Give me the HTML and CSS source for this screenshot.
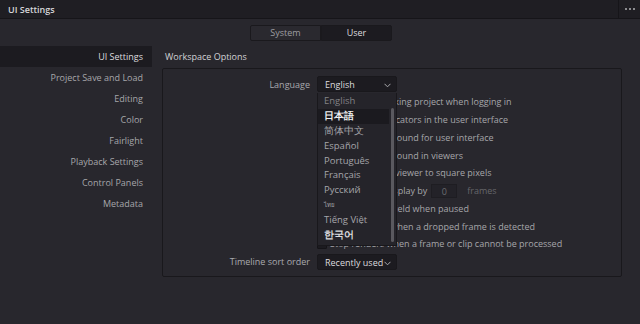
FILE: index.html
```html
<!DOCTYPE html>
<html lang="en">
<head>
    <meta charset="UTF-8">
    <meta name="viewport" content="width=device-width, initial-scale=1.0">
    <title>UI Settings</title>
    <link rel="stylesheet" href="styles.css">
</head>
<body>
    <div class="titlebar">
        <span class="title">UI Settings</span>
        <div class="more"><i></i><i></i><i></i></div>
    </div>

    <div class="tabs">
        <div class="tab">System</div>
        <div class="tab active">User</div>
    </div>

    <div class="main">
        <ul class="sidebar">
            <li class="selected">UI Settings</li>
            <li>Project Save and Load</li>
            <li>Editing</li>
            <li>Color</li>
            <li>Fairlight</li>
            <li>Playback Settings</li>
            <li>Control Panels</li>
            <li>Metadata</li>
        </ul>

        <div class="content">
            <div class="heading">Workspace Options</div>
            <div class="panel">
                <div class="row">
                    <span class="label">Language</span>
                    <div class="select-wrap">
                        <div class="select">English
                            <svg class="chev" width="7" height="5" viewBox="0 0 7 5"><polyline points="0.5,0.8 3.5,3.8 6.5,0.8" fill="none" stroke="#a9a9ad" stroke-width="1"/></svg>
                        </div>
                        <ul class="dropdown">
                            <li class="dim">English</li>
                            <li class="hover">日本語</li>
                            <li>简体中文</li>
                            <li>Español</li>
                            <li>Português</li>
                            <li>Français</li>
                            <li>Русский</li>
                            <li class="thai">ไทย</li>
                            <li>Tiếng Việt</li>
                            <li class="korean">한국어</li>
                        </ul>
                        <div class="scrollbar"></div>
                    </div>
                </div>

                <div class="checks">
                    <div class="check"><span class="box"></span>Reload last working project when logging in</div>
                    <div class="check"><span class="box"></span>Show focus indicators in the user interface</div>
                    <div class="check"><span class="box"></span>Use gray background for user interface</div>
                    <div class="check"><span class="box"></span>Use gray background in viewers</div>
                    <div class="check"><span class="box"></span>Auto-resize HD viewer to square pixels</div>
                    <div class="check"><span class="box"></span>Delay viewer display by <span class="num">0</span> <span class="unit">frames</span></div>
                    <div class="check"><span class="box"></span>Show all video field when paused</div>
                    <div class="check"><span class="box"></span>Stop playback when a dropped frame is detected</div>
                    <div class="check"><span class="box"></span>Stop renders when a frame or clip cannot be processed</div>
                </div>

                <div class="row last">
                    <span class="label">Timeline sort order</span>
                    <div class="select">Recently used
                        <svg class="chev" width="7" height="5" viewBox="0 0 7 5"><polyline points="0.5,0.8 3.5,3.8 6.5,0.8" fill="none" stroke="#a9a9ad" stroke-width="1"/></svg>
                    </div>
                </div>
            </div>
        </div>
    </div>
</body>
</html>
```

FILE: styles.css
```css
* {
    box-sizing: border-box;
}
body {
    margin: 0;
    width: 640px;
    height: 324px;
    overflow: hidden;
    background-color: #28272d;
    font-family: "Open Sans", "Noto Sans", sans-serif;
    font-size: 9px;
    color: #a9a9ad;
}
ul {
    list-style: none;
    margin: 0;
    padding: 0;
}
.titlebar {
    height: 19px;
    display: flex;
    align-items: center;
    justify-content: space-between;
    background-color: #1f1e23;
    border-bottom: 1px solid #161519;
}
.title {
    padding-left: 8px;
    font-weight: 600;
    font-size: 9px;
    color: #d6d6d9;
}
.more {
    height: 18px;
    width: 22px;
    border-left: 1px solid #161519;
    display: flex;
    align-items: center;
    justify-content: center;
    gap: 2px;
}
.more i {
    width: 2px;
    height: 2px;
    background-color: #8c8c90;
}
.tabs {
    display: flex;
    justify-content: center;
    margin-top: 6px;
    padding-left: 2px;
}
.tab {
    width: 71px;
    height: 16px;
    line-height: 14px;
    text-align: center;
    border: 1px solid #1a191d;
    background-color: #2a292f;
    color: #9d9da1;
}
.tab:first-child {
    border-radius: 2px 0 0 2px;
}
.tab.active {
    background-color: #1c1b20;
    color: #dcdcdf;
    border-radius: 0 2px 2px 0;
}
.main {
    display: flex;
    margin-top: 5px;
    gap: 10px;
}
.sidebar {
    width: 152px;
}
.sidebar li {
    height: 21px;
    line-height: 21px;
    text-align: right;
    padding-right: 9px;
    color: #a6a6aa;
}
.sidebar li.selected {
    background-color: #1c1b20;
    color: #dcdcdf;
}
.content {
    width: 460px;
}
.heading {
    height: 22px;
    line-height: 21px;
    padding-left: 3px;
    color: #d2d2d5;
}
.panel {
    border: 1px solid #19181c;
    border-radius: 2px;
    padding: 7px 0 6px;
}
.row {
    display: flex;
    align-items: center;
    gap: 7px;
    height: 16px;
}
.row.last {
    margin-top: 1px;
}
.label {
    width: 147px;
    text-align: right;
}
.select {
    position: relative;
    width: 80px;
    height: 16px;
    line-height: 15px;
    padding-left: 7px;
    background-color: #1c1b20;
    border: 1px solid #19181c;
    border-radius: 2px;
    color: #dcdcdf;
}
.chev {
    position: absolute;
    right: 5px;
    top: 6px;
}
.select-wrap {
    position: relative;
    z-index: 2;
}
.dropdown {
    position: absolute;
    left: 0;
    top: 17px;
    width: 80px;
    height: 153px;
    padding-top: 1px;
    background-color: #25242a;
    border: 1px solid #19181c;
    border-top: none;
}
.dropdown li {
    height: 14.9px;
    line-height: 14.9px;
    padding-left: 6px;
    margin-right: 7px;
    color: #a6a6aa;
    font-size: 9.5px;
}
.dropdown li.dim {
    color: #828286;
}
.dropdown li.hover {
    background-color: #1b1a1f;
    color: #f0f0f2;
    font-weight: 700;
}
.dropdown li.thai {
    font-size: 6px;
}
.dropdown li.korean {
    color: #dcdcdf;
    font-weight: 700;
}
.scrollbar {
    position: absolute;
    left: 74px;
    top: 32px;
    width: 3px;
    height: 134px;
    border-radius: 2px;
    background-color: #5a595f;
}
.checks {
    padding-top: 1px;
}
.check {
    height: 17.75px;
    display: flex;
    align-items: center;
    padding-left: 154px;
    white-space: nowrap;
    color: #a6a6aa;
}
.box {
    flex: none;
    width: 10px;
    height: 10px;
    margin-right: 3px;
    background-color: #1c1b20;
    border: 1px solid #151418;
    border-radius: 1px;
}
.num {
    display: inline-block;
    width: 26px;
    height: 14px;
    line-height: 14px;
    margin: 0 10px 0 4px;
    text-align: center;
    background-color: #232228;
    border: 1px solid #1e1d22;
    color: #6c6c70;
}
.unit {
    color: #66666a;
}
```
